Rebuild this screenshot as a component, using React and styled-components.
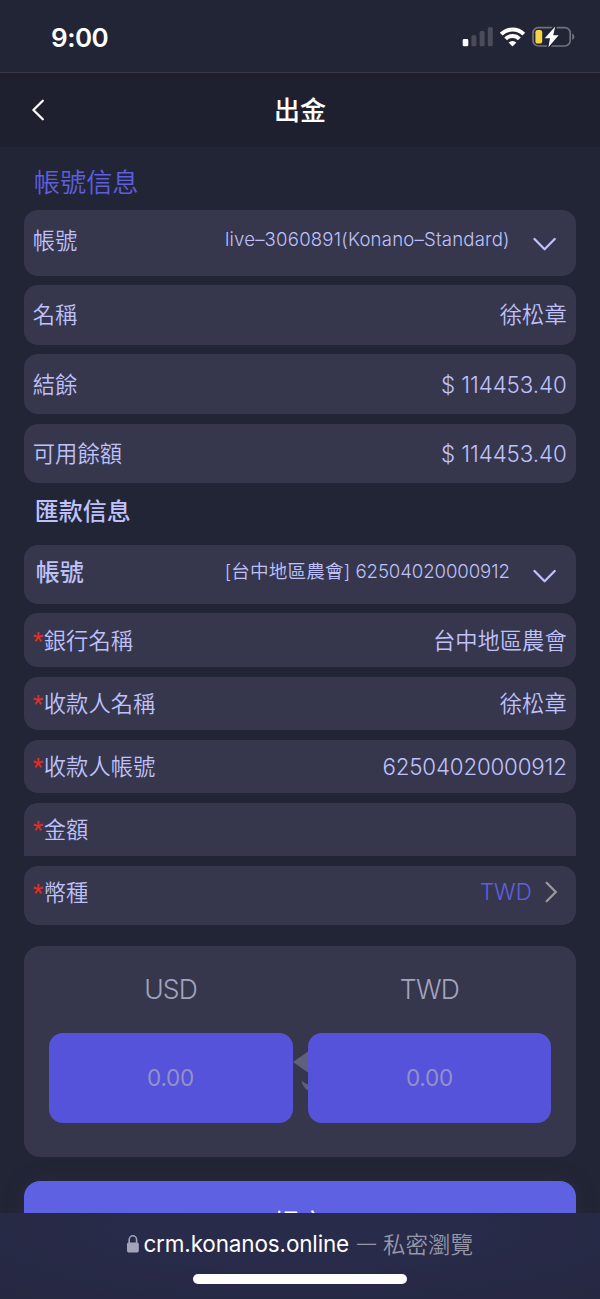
import styled, { createGlobalStyle } from "styled-components";

function StatusBar() {
    return (
        <StatusBarDesign>
            <Clock>9:00</Clock>
            <svg width="113" height="24" viewBox="0 0 113 24">
                <rect x="0.7" y="13" width="5.6" height="7.3" rx="1.4" fill="#ffffff" />
                <rect x="9.4" y="9.3" width="5" height="11" rx="1.4" fill="#4b4c5a" />
                <rect x="17.6" y="5" width="5" height="15.3" rx="1.4" fill="#4b4c5a" />
                <rect x="25.8" y="1.2" width="5" height="19.1" rx="1.4" fill="#4b4c5a" />
                <g fill="none" stroke="#ffffff" strokeWidth="4">
                    <path d="M39.2 8.2 A16 16 0 0 1 61.8 8.2" />
                    <path d="M43.6 12.8 A9.8 9.8 0 0 1 57.4 12.8" />
                </g>
                <path d="M50.5 20.5 L46.6 16.6 A5.6 5.6 0 0 1 54.4 16.6 Z" fill="#ffffff" />
                <rect x="71" y="1.6" width="37.2" height="18.4" rx="5.4" fill="none" stroke="#70717c" strokeWidth="1.7" />
                <path d="M110.2 7.6 Q112.4 8.6 112.4 10.8 Q112.4 13 110.2 14 Z" fill="#70717c" />
                <path d="M93.2 0.4 L82.7 12.2 H88 L86.4 21.2 L96.6 9.2 H91.2 Z" fill="#ffffff" stroke="#222535" strokeWidth="3.4" strokeLinejoin="round" paintOrder="stroke" />
                <rect x="73.4" y="4" width="6.8" height="13.6" rx="2.2" fill="#f7d446" />
            </svg>
        </StatusBarDesign>
    )
}

function HeaderPage() {
    return (
        <HeaderDesign>
            <svg width="14" height="22" viewBox="0 0 14 22">
                <path d="M11.8 1.8 L2.4 11 L11.8 20.2" fill="none" stroke="#ffffff" strokeWidth="2.3" strokeLinecap="round" strokeLinejoin="round" />
            </svg>
            <h1>出金</h1>
            <span />
        </HeaderDesign>
    )
}

function ChevronDown() {
    return (
        <svg width="24" height="16" viewBox="0 0 24 16">
            <path d="M1.5 3 L11.6 13.2 L21.7 3" fill="none" stroke="#bfc1fb" strokeWidth="2.3" strokeLinecap="round" strokeLinejoin="round" />
        </svg>
    )
}

function Field({ label, value, required, height, spacing }) {
    return (
        <Row $height={height}>
            <Label>{required && <i>*</i>}{label}</Label>
            <Value $spacing={spacing}>{value}</Value>
        </Row>
    )
}

function AmountColumn({ currency, spacing }) {
    return (
        <AmountColumnDesign>
            <Currency $spacing={spacing}>{currency}</Currency>
            <AmountInput placeholder="0.00" />
        </AmountColumnDesign>
    )
}

function BrowserBar() {
    return (
        <BrowserBarDesign>
            <Address>
                <svg width="12" height="18" viewBox="0 0 12 18">
                    <rect x="0" y="7.4" width="11.8" height="10" rx="1.6" fill="#a3a4b7" />
                    <path d="M2.2 8 V4.8 A3.7 4 0 0 1 9.6 4.8 V8" fill="none" stroke="#a3a4b7" strokeWidth="1.6" />
                </svg>
                <b>crm.konanos.online</b>
                <em>—</em>
                <span>私密瀏覽</span>
            </Address>
            <HomeIndicator />
        </BrowserBarDesign>
    )
}

export default function App() {
    return (
        <Container>
            <GlobalStyle />
            <StatusBar />
            <HeaderPage />
            <Content>
                <SectionTitle>帳號信息</SectionTitle>
                <FieldList $gap="9.6px">
                    <Row $height="65.5px" $lift="5px">
                        <Label>帳號</Label>
                        <Selected $spacing="0.19px">live–3060891(Konano–Standard)</Selected>
                        <ChevronDown />
                    </Row>
                    <Field label="名稱" value="徐松章" height="59.7px" />
                    <Field label="結餘" value="$ 114453.40" height="59.7px" spacing="-0.05px" />
                    <Field label="可用餘額" value="$ 114453.40" height="59.7px" spacing="-0.05px" />
                </FieldList>
                <SectionSubtitle>匯款信息</SectionSubtitle>
                <FieldList $gap="9.8px">
                    <Row $height="59px" $lift="4px">
                        <Label $strong>帳號</Label>
                        <Selected $spacing="-0.1px"><span>[台中地區農會]</span> 62504020000912</Selected>
                        <ChevronDown />
                    </Row>
                    <Field required label="銀行名稱" value="台中地區農會" height="53.3px" />
                    <Field required label="收款人名稱" value="徐松章" height="53.3px" />
                    <Field required label="收款人帳號" value="62504020000912" height="53.3px" spacing="-0.17px" />
                    <Row $height="53.3px" $open>
                        <Label><i>*</i>金額</Label>
                    </Row>
                    <Row $height="58.7px" $lift="6px">
                        <Label><i>*</i>幣種</Label>
                        <CurrencyLink>
                            TWD
                            <svg width="13" height="22" viewBox="0 0 13 22">
                                <path d="M1.6 1.8 L10.8 11 L1.6 20.2" fill="none" stroke="#9a9a9e" strokeWidth="2.2" strokeLinecap="round" />
                            </svg>
                        </CurrencyLink>
                    </Row>
                </FieldList>
                <Exchange>
                    <AmountColumn currency="USD" spacing="-0.9px" />
                    <svg width="15" height="90" viewBox="0 0 15 90">
                        <path d="M0 29 L15 18.5 V39.5 Z" fill="#5f617c" />
                        <path d="M8.5 47.5 Q11.5 50.5 15 51.5 V57.5 Q9.5 54 8.5 47.5 Z" fill="#5f617c" />
                    </svg>
                    <AmountColumn currency="TWD" spacing="-0.7px" />
                </Exchange>
                <Submit>提交</Submit>
            </Content>
            <BrowserBar />
        </Container>
    )
}

const GlobalStyle = createGlobalStyle`
    * {
        box-sizing: border-box;
    }
    body {
        margin: 0;
        background: #222535;
        font-family: Inter, 'Noto Sans CJK TC', sans-serif;
    }
    svg {
        display: block;
        flex-shrink: 0;
    }
`

const Container = styled.div`
    width: 600px;
    height: 1299px;
    display: flex;
    flex-direction: column;
    overflow: hidden;
    background: #222535;
`

const StatusBarDesign = styled.div`
    height: 73px;
    flex-shrink: 0;
    display: flex;
    justify-content: space-between;
    align-items: center;
    padding: 4px 25px 0 51px;
    border-bottom: 1px solid #373947;
`

const Clock = styled.div`
    font-size: 26px;
    font-weight: 600;
    line-height: 32px;
    letter-spacing: -0.5px;
    color: #ffffff;
`

const HeaderDesign = styled.header`
    height: 74px;
    flex-shrink: 0;
    display: flex;
    justify-content: space-between;
    align-items: center;
    padding: 0 31px;
    background: #1e2030;
    h1 {
        margin: 2px 0 0;
        font-size: 26px;
        font-weight: 500;
        line-height: 36px;
        color: #ffffff;
    }
    span {
        width: 14px;
    }
`

const Content = styled.main`
    height: 1066px;
    flex-shrink: 0;
    overflow: hidden;
    padding: 0 24.3px;
`

const SectionTitle = styled.h2`
    height: 63px;
    margin: 0;
    padding: 18px 0 0 9.5px;
    font-size: 26.2px;
    font-weight: 350;
    line-height: 36px;
    color: #5e5fe0;
`

const SectionSubtitle = styled.h3`
    height: 61.3px;
    margin: 0;
    padding: 11px 0 0 10.5px;
    font-size: 24px;
    font-weight: 500;
    line-height: 36px;
    color: #bfc1fb;
`

const FieldList = styled.div`
    display: flex;
    flex-direction: column;
    gap: ${props => props.$gap};
`

const Row = styled.div`
    height: ${props => props.$height};
    display: flex;
    align-items: center;
    padding: 0 9px ${props => props.$lift || "0"} 8.5px;
    background: #36374d;
    border-radius: ${props => props.$open ? "14px 14px 0 0" : "14px"};
    > svg {
        margin: 7px 10px 0 23px;
    }
`

const Label = styled.div`
    padding-top: 1px;
    padding-left: ${props => props.$strong ? "3px" : "0"};
    font-size: ${props => props.$strong ? "24px" : "22.3px"};
    font-weight: ${props => props.$strong ? 500 : 350};
    line-height: 32px;
    color: #bfc1fb;
    i {
        display: inline-block;
        width: 11px;
        font-family: 'Liberation Sans', sans-serif;
        font-size: 27px;
        font-style: normal;
        line-height: 0;
        vertical-align: -2px;
        color: #e62f22;
    }
`

const Value = styled.div`
    margin-left: auto;
    padding-top: 1px;
    font-size: 22.3px;
    font-weight: 350;
    line-height: 32px;
    letter-spacing: ${props => props.$spacing || "0"};
    color: #bfc1fb;
`

const Selected = styled(Value)`
    margin-bottom: 3px;
    font-size: 18.6px;
    font-weight: 320;
    span {
        font-weight: 350;
        letter-spacing: 0.15px;
    }
`

const CurrencyLink = styled.div`
    margin-left: auto;
    margin-right: 9px;
    display: flex;
    align-items: center;
    gap: 13px;
    font-size: 22.3px;
    font-weight: 300;
    line-height: 32px;
    color: #5e5fe0;
`

const Exchange = styled.section`
    height: 211px;
    margin-top: 21.4px;
    padding: 24px 24.3px 0;
    display: flex;
    align-items: flex-start;
    background: #36374d;
    border-radius: 16px;
    > svg {
        margin-top: 63px;
    }
`

const AmountColumnDesign = styled.div`
    flex: 1;
    min-width: 0;
    display: flex;
    flex-direction: column;
    gap: 25px;
`

const Currency = styled.div`
    font-size: 26.5px;
    font-weight: 300;
    line-height: 38px;
    letter-spacing: ${props => props.$spacing};
    text-align: center;
    color: #a2a4bd;
`

const AmountInput = styled.input`
    width: 100%;
    height: 90px;
    padding: 0 0 1px;
    border: 0;
    border-radius: 14px;
    background: #5653db;
    font-family: inherit;
    font-size: 22.5px;
    letter-spacing: -0.2px;
    text-align: center;
    &::placeholder {
        color: #9291c9;
        opacity: 1;
    }
`

const Submit = styled.button`
    width: 100%;
    height: 76px;
    margin-top: 24px;
    padding: 11px 0 0;
    border: 0;
    border-radius: 16px;
    background: #5d61e2;
    box-shadow: 0 0 20px rgba(60, 60, 80, 0.25);
    font-family: inherit;
    font-size: 26px;
    font-weight: 400;
    line-height: 36px;
    color: #ffffff;
`

const BrowserBarDesign = styled.footer`
    height: 86px;
    flex-shrink: 0;
    display: flex;
    flex-direction: column;
    align-items: center;
    padding-top: 14px;
    background: radial-gradient(ellipse 420px 90px at 50% 20%, #282b4a 30%, #262842 100%);
`

const Address = styled.div`
    display: flex;
    align-items: center;
    height: 34px;
    font-size: 22.5px;
    line-height: 34px;
    color: #9697a8;
    b {
        margin-left: 4.5px;
        font-weight: 400;
        letter-spacing: -0.15px;
        color: #ffffff;
    }
    em {
        margin: 0 7px 0 8px;
        font-size: 19px;
        font-style: normal;
        font-weight: 300;
    }
    span {
        padding-top: 1px;
        font-weight: 350;
    }
`

const HomeIndicator = styled.div`
    width: 214px;
    height: 10px;
    margin-top: 13px;
    border-radius: 5px;
    background: #ffffff;
`
